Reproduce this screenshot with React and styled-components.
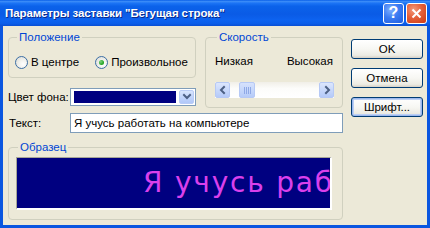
import React from 'react'
import styled, { createGlobalStyle } from 'styled-components'

const GlobalStyle = createGlobalStyle`
    html, body {
        margin: 0;
        padding: 0;
        background: #ffffff;
    }
    body {
        font-family: "Liberation Sans", Arial, sans-serif;
        font-size: 11.5px;
        color: #000000;
    }
    * {
        box-sizing: border-box;
    }
`

const Window = styled.div`
    width: 430px;
    height: 228px;
    display: flex;
    flex-direction: column;
    background: #0A56E0;
    overflow: hidden;
`

const TitleBar = styled.div`
    height: 26px;
    flex: none;
    display: flex;
    align-items: center;
    gap: 2px;
    padding: 0 3px 0 5px;
    background: linear-gradient(to bottom, #0A5FE8 0%, #3B8CF8 6%, #1C74F5 12%, #0B62EA 24%, #0A5BE6 55%, #0D63F0 78%, #0B5EEA 90%, #0A4FD4 100%);
`

const Title = styled.span`
    flex: 1;
    color: #ffffff;
    font-family: "Liberation Sans", Arial, sans-serif;
    font-weight: bold;
    font-size: 11.5px;
    letter-spacing: -0.1px;
    text-shadow: 1px 1px 0 #0A2A8A;
    white-space: nowrap;
`

const CaptionButton = styled.div`
    width: 21px;
    height: 21px;
    border: 1px solid #ffffff;
    border-radius: 3px;
    display: flex;
    align-items: center;
    justify-content: center;
    color: #ffffff;
    font-family: "Liberation Sans", Arial, sans-serif;
    font-weight: bold;
    font-size: 16px;
    background: ${p => p.$close
        ? 'radial-gradient(circle at 35% 30%, #F39A7C 0%, #E5603A 45%, #CC3A14 100%)'
        : 'radial-gradient(circle at 35% 30%, #7FB0FF 0%, #3B7CF2 45%, #1F5DE0 100%)'};
`

const Client = styled.div`
    flex: 1;
    margin: 0 3px 3px 3px;
    background: #ECE9D8;
    display: flex;
    gap: 8px;
    padding: 4px 4px 0 5px;
`

const LeftColumn = styled.div`
    width: 335px;
    display: flex;
    flex-direction: column;
`

const TopRow = styled.div`
    display: flex;
    gap: 9px;
`

const SubColumn = styled.div`
    display: flex;
    flex-direction: column;
`

const Group = styled.fieldset`
    margin: 0;
    padding: 0 ${p => p.$padRight || 6}px 0 ${p => p.$padLeft || 6}px;
    min-width: 0;
    width: ${p => p.$width}px;
    height: ${p => p.$height}px;
    border: 1px solid #D0D0BF;
    border-radius: 4px;
`

const Legend = styled.legend`
    margin-left: 2px;
    padding: 0 2px;
    color: #0046D5;
    font-size: 11.5px;
    line-height: 14px;
`

const RadioRow = styled.div`
    display: flex;
    align-items: center;
    margin-top: 11px;
    gap: 16px;
`

const RadioItem = styled.label`
    display: flex;
    align-items: center;
    gap: 3px;
    line-height: 14px;
    white-space: nowrap;
`

const RadioCircle = styled.span`
    width: 13px;
    height: 13px;
    flex: none;
    border-radius: 50%;
    border: 1px solid #3B6EA5;
    background: radial-gradient(circle at 65% 65%, #ffffff 0%, #F2F2EE 40%, #D8D8D0 100%);
    display: flex;
    align-items: center;
    justify-content: center;

    &::after {
        content: '';
        display: ${p => (p.$checked ? 'block' : 'none')};
        width: 5px;
        height: 5px;
        border-radius: 50%;
        background: radial-gradient(circle at 35% 35%, #7FD07F 0%, #27A827 60%, #168A16 100%);
    }
`

const FieldRow = styled.div`
    display: flex;
    align-items: center;
    margin-top: ${p => p.$top}px;
`

const FieldLabel = styled.span`
    width: 62px;
    flex: none;
    padding-left: ${p => p.$indent || 0}px;
    line-height: 14px;
    white-space: nowrap;
`

const Combo = styled.div`
    width: 126px;
    height: 18px;
    border: 1px solid #7F9DB9;
    background: #ffffff;
    display: flex;
    align-items: stretch;
    padding: 1px 1px 1px 3px;
    gap: 3px;
`

const Swatch = styled.div`
    flex: 1;
    margin: 1px 0;
    background: #000080;
`

const ComboButton = styled.div`
    width: 15px;
    border: 1px solid #B9CCF6;
    border-radius: 2px;
    background: linear-gradient(to bottom, #D8E5FD 0%, #C2D5FB 50%, #B1C8F8 100%);
    display: flex;
    align-items: center;
    justify-content: center;
`

const SpeedLabels = styled.div`
    display: flex;
    justify-content: space-between;
    margin-top: 10px;
    padding-right: 1px;
    line-height: 14px;
`

const ScrollBar = styled.div`
    margin-top: 14px;
    height: 16px;
    width: 119px;
    display: flex;
    align-items: stretch;
    background: linear-gradient(to bottom, #F1EFE8 0%, #FCFCFA 40%, #ffffff 100%);
`

const ScrollArrow = styled.div`
    width: 15px;
    border: 1px solid #B6C9F5;
    border-radius: 2px;
    background: linear-gradient(to bottom, #DCE6FD 0%, #C6D7FB 55%, #B5CAF8 100%);
    display: flex;
    align-items: center;
    justify-content: center;
`

const Track = styled.div`
    flex: 1;
    display: flex;
    align-items: stretch;
    padding-left: ${p => p.$offset}px;
`

const Thumb = styled.div`
    width: 16px;
    border: 1px solid #B6C9F5;
    border-radius: 2px;
    background: linear-gradient(to bottom, #D6E2FD 0%, #C3D5FB 60%, #B6CBF8 100%);
    display: flex;
    align-items: center;
    justify-content: center;
    gap: 1px;

    span {
        width: 1px;
        height: 7px;
        background: #8FA9E6;
    }
`

const TextInput = styled.div`
    width: 273px;
    height: 20px;
    border: 1px solid #7F9DB9;
    background: #ffffff;
    padding-left: 3px;
    display: flex;
    align-items: center;
    white-space: nowrap;
`

const Preview = styled.div`
    margin-top: 3px;
    height: 53px;
    width: 316px;
    background: #000080;
    border-top: 1px solid #A7A698;
    border-left: 1px solid #A7A698;
    border-right: 2px solid #ffffff;
    border-bottom: 2px solid #ffffff;
    overflow: hidden;
    white-space: nowrap;
    padding: 10px 0 0 126px;
`

const Marquee = styled.span`
    color: #DA40EC;
    font-family: "DejaVu Sans", Verdana, sans-serif;
    font-size: 28px;
    line-height: 30px;
    letter-spacing: 1.8px;
`

const ButtonColumn = styled.div`
    display: flex;
    flex-direction: column;
    gap: 9px;
    padding-top: 9px;
`

const Button = styled.div`
    width: 72px;
    height: 20px;
    border: 1px solid #003C74;
    border-radius: 3px;
    display: flex;
    align-items: center;
    justify-content: center;
    line-height: 14px;
    background: linear-gradient(to bottom, #ffffff 0%, #F7F7F3 50%, #ECEBE3 85%, #D6D0C5 100%);
    box-shadow: ${p => (p.$focused ? 'inset 0 0 0 1px #9CB8EE, inset 0 0 0 2px #BCD0F4' : 'none')};
`

const Chevron = ({ dir }) => {
    const d = {
        down: 'M2 3 L5 6 L8 3',
        left: 'M6 2 L3 5 L6 8',
        right: 'M4 2 L7 5 L4 8',
    }[dir]
    return (
        <svg width="10" height="10" viewBox="0 0 10 10">
            <path d={d} fill="none" stroke="#4D6185" strokeWidth="2" strokeLinecap="square" />
        </svg>
    )
}

const App = () => {
    return (
        <>
            <GlobalStyle />
            <Window>
                <TitleBar>
                    <Title>Параметры заставки "Бегущая строка"</Title>
                    <CaptionButton>?</CaptionButton>
                    <CaptionButton $close>
                        <svg width="11" height="11" viewBox="0 0 11 11">
                            <path d="M1.5 1.5 L9.5 9.5 M9.5 1.5 L1.5 9.5" stroke="#ffffff" strokeWidth="2" />
                        </svg>
                    </CaptionButton>
                </TitleBar>
                <Client>
                    <LeftColumn>
                        <TopRow>
                            <SubColumn>
                                <Group $width={188} $height={48}>
                                    <Legend>Положение</Legend>
                                    <RadioRow>
                                        <RadioItem>
                                            <RadioCircle />
                                            В центре
                                        </RadioItem>
                                        <RadioItem>
                                            <RadioCircle $checked />
                                            Произвольное
                                        </RadioItem>
                                    </RadioRow>
                                </Group>
                                <FieldRow $top={10}>
                                    <FieldLabel>Цвет фона:</FieldLabel>
                                    <Combo>
                                        <Swatch />
                                        <ComboButton>
                                            <Chevron dir="down" />
                                        </ComboButton>
                                    </Combo>
                                </FieldRow>
                            </SubColumn>
                            <Group $width={138} $height={78} $padLeft={9} $padRight={8}>
                                <Legend>Скорость</Legend>
                                <SpeedLabels>
                                    <span>Низкая</span>
                                    <span>Высокая</span>
                                </SpeedLabels>
                                <ScrollBar>
                                    <ScrollArrow>
                                        <Chevron dir="left" />
                                    </ScrollArrow>
                                    <Track $offset={9}>
                                        <Thumb>
                                            <span />
                                            <span />
                                            <span />
                                            <span />
                                        </Thumb>
                                    </Track>
                                    <ScrollArrow>
                                        <Chevron dir="right" />
                                    </ScrollArrow>
                                </ScrollBar>
                            </Group>
                        </TopRow>
                        <FieldRow $top={5}>
                            <FieldLabel $indent={1}>Текст:</FieldLabel>
                            <TextInput>Я учусь работать на компьютере</TextInput>
                        </FieldRow>
                        <FieldRow $top={7}>
                            <Group $width={335} $height={80} $padLeft={7}>
                                <Legend>Образец</Legend>
                                <Preview>
                                    <Marquee>Я учусь работать на компьютере</Marquee>
                                </Preview>
                            </Group>
                        </FieldRow>
                    </LeftColumn>
                    <ButtonColumn>
                        <Button>OK</Button>
                        <Button>Отмена</Button>
                        <Button $focused>Шрифт...</Button>
                    </ButtonColumn>
                </Client>
            </Window>
        </>
    )
}

export default App
